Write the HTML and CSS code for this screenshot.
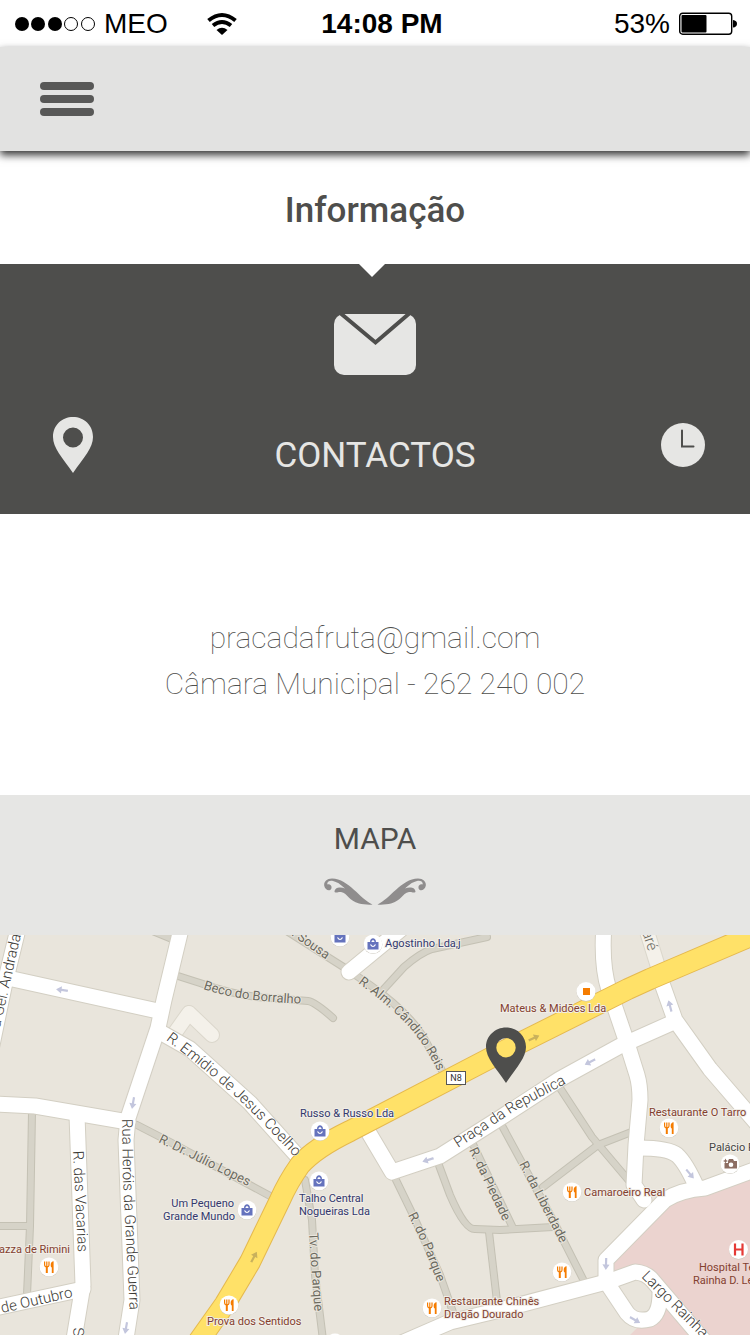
FILE: index.html
```html
<!DOCTYPE html>
<html lang="pt">
<head>
<meta charset="UTF-8">
<meta name="viewport" content="width=device-width, initial-scale=1.0">
<title>Informação</title>
<link rel="stylesheet" href="styles.css">
</head>
<body>

<div class="status">
    <div class="status-left">
        <svg class="signal" width="80" height="16" viewBox="0 0 80 16" aria-hidden="true">
            <circle cx="7" cy="8" r="7"/>
            <circle cx="23" cy="8" r="7"/>
            <circle cx="40" cy="8" r="7"/>
            <circle class="empty" cx="56" cy="8" r="6.5"/>
            <circle class="empty" cx="73" cy="8" r="6.5"/>
        </svg>
        <span>MEO</span>
        <svg class="wifi" width="30" height="24" viewBox="0 0 30 24" aria-hidden="true">
            <path class="arc" d="M1.500 8.500Q15 -2.500 28.500 8.500"/>
            <path class="arc" d="M6 13.500Q15 6.500 24 13.500"/>
            <path d="M9.500 18Q15 13.500 20.500 18L15 23Z"/>
        </svg>
    </div>
    <b class="time">14:08 PM</b>
    <div class="status-right">
        <span>53%</span>
        <svg width="58" height="24" viewBox="0 0 58 24" aria-hidden="true">
            <rect x="0.700" y="1.200" width="52" height="21" rx="3" fill="none" stroke="#000" stroke-width="1.400"/>
            <rect x="2.500" y="3" width="25" height="17.500" rx="1"/>
            <path d="M54 8Q58 8.500 58 11.700Q58 15 54 15.500Z"/>
        </svg>
    </div>
</div>

<header class="header">
    <button type="button" class="menu" aria-label="Menu">
        <span></span>
        <span></span>
        <span></span>
    </button>
</header>

<h1 class="title">Informação</h1>

<nav class="tabs">
    <button type="button" class="tab" aria-label="Localização">
        <svg width="40" height="56" viewBox="0 0 40 56">
            <path fill-rule="evenodd" d="M20 0C31 0 40 8 40 20C40 31 31 40 20 56C9 40 0 31 0 20C0 8 9 0 20 0ZM20 10.500A10 10 0 1 0 20 30.500A10 10 0 1 0 20 10.500Z"/>
        </svg>
    </button>
    <button type="button" class="tab tab-active">
        <svg width="82" height="62" viewBox="0 0 82 62" aria-hidden="true">
            <rect width="82" height="61" y="1" rx="10"/>
            <path d="M8 1H73L41.500 27Z"/>
            <path class="fold" d="M5 -1L41.500 29.500L77 -1"/>
        </svg>
        <span>CONTACTOS</span>
    </button>
    <button type="button" class="tab" aria-label="Horário">
        <svg width="44" height="44" viewBox="0 0 44 44">
            <circle cx="22" cy="22" r="22"/>
            <path class="hands" d="M21 7.500V23.500H32.500"/>
        </svg>
    </button>
</nav>

<section class="contacts">
    <a href="mailto:pracadafruta@gmail.com">pracadafruta@gmail.com</a>
    <p>Câmara Municipal - <a href="tel:262240002">262 240 002</a></p>
</section>

<section class="map-head">
    <h2>MAPA</h2>
    <svg width="102" height="28" viewBox="0 0 102 28" aria-hidden="true">
        <g id="scroll">
            <path d="M48.500 26.500C36 21 25 1 8 0.500C2 0.500 -0.500 4.500 0.300 8C1 12 5.500 13.500 7.200 11C8.500 8 6 5.500 3.500 6.500C2.500 4 5.500 2 9 3C15 4.500 18 8 21 10.500C16 8.500 10.500 9.500 10.500 14C13 15.500 14 13.500 17 14C24 15.500 25 23 35 25.500C39 26.500 45 27 48.500 26.500Z"/>
        </g>
        <use href="#scroll" transform="translate(102 0) scale(-1 1)"/>
    </svg>
</section>

<svg class="map" viewBox="0 935 750 400" role="img" aria-label="Mapa">
    <defs>
        <symbol id="shop" viewBox="-10 -10 20 20">
            <circle class="shadow" r="9.400" cy="0.600"/><circle class="disc" r="9.400"/>
            <path fill="#6573bd" d="M-5.500 -2H-3C-3 -7 3 -7 3 -2H5.500V5.500H-5.500ZM-1.500 -2H1.500C1.500 -4.500 -1.500 -4.500 -1.500 -2Z"/>
            <path fill="none" stroke="#fff" stroke-width="1.200" d="M-2.500 0.500Q0 4.500 2.500 0.500"/>
        </symbol>
        <symbol id="food" viewBox="-10 -10 20 20">
            <circle class="shadow" r="9.400" cy="0.600"/><circle class="disc" r="9.400"/>
            <path fill="none" stroke="#f57c00" stroke-width="1.200" d="M-4.400 -5.500V-2.500Q-4.400 0 -2.200 0Q0 0 0 -2.500V-5.500M-2.200 -5.500V0"/>
            <path fill="#f57c00" d="M-3.200 0H-1.200V6H-3.200ZM2 0C1 -3.500 2.500 -5.700 4.600 -5.700V6H2.800V0.500Z"/>
        </symbol>
        <symbol id="arrow" viewBox="-6 -4 12 8">
            <path d="M-6 0L-0.500 -3.600V-1.100H6V1.100H-0.500V3.600Z"/>
        </symbol>

        <path id="t-andrada" d="M-4 1045L9 988L21 935"/>
        <path id="t-beco" d="M203 989Q240 1002 312 1004"/>
        <path id="t-sousa" d="M291 935L341 970"/>
        <path id="t-alm" d="M358 983Q390 1006 410 1028Q428 1048 445 1087"/>
        <path id="t-emidio" d="M166 1040Q189 1057 219 1082T309 1172"/>
        <path id="t-julio" d="M158 1142L270 1197"/>
        <path id="t-herois" d="M122 1119L123 1180L131 1335"/>
        <path id="t-vacarias" d="M73 1151L79 1273"/>
        <path id="t-outubro" d="M2 1313L90 1293"/>
        <path id="t-tv" d="M309 1233L316 1335"/>
        <path id="t-parque" d="M408 1215L423 1245L446 1305"/>
        <path id="t-praca" d="M458 1148L516 1110L586 1073"/>
        <path id="t-piedade" d="M469 1150L514 1244"/>
        <path id="t-liberdade" d="M519 1164L577 1275"/>
        <path id="t-largo" d="M641 1277L720 1356"/>
        <path id="t-are" d="M642 932L654 968"/>
    </defs>

    <rect class="land" x="0" y="935" width="750" height="400"/>
    <path class="hospital" d="M606 1270L675 1200L705 1190L760 1168V1340H625L640 1325L655 1320L665 1300L655 1282L635 1272Z"/>

    <!-- each road is drawn twice: edge first, then the fill -->
    <g class="lane-edge">
        <g id="lanes">
            <path d="M150 930L172 939"/>
            <path d="M178 976L200 983Q240 997 270 998L308 1001Q315 1002 333 1018"/>
            <path d="M285 930L345 968L370 985Q410 1013 425 1040L445 1076"/>
            <path d="M383 990L404 967Q420 953 432 949L487 937"/>
            <path d="M137 1125L170 1142L272 1197"/>
            <path d="M32 1112L30 1226L27 1295M-5 1226H30"/>
            <path d="M305 1180L312 1220L315 1275L323 1340"/>
            <path d="M395 1178L413 1215L440 1275L454 1315"/>
            <path d="M437 1160L450 1195Q465 1230 475 1229L500 1230L553 1227"/>
            <path d="M489 1232L498 1310"/>
            <path d="M470 1138L513 1228"/>
            <path d="M500 1122L553 1220L586 1285"/>
            <path d="M558 1085L592 1137L630 1182"/>
            <path d="M634 1131L598 1145L543 1187"/>
        </g>
    </g>
    <use href="#lanes" class="lane"/>

    <path class="court-edge" d="M172 1037L189 1013L212 1035M645 925L659 970"/>
    <path class="court" d="M172 1037L189 1013L212 1035M645 925L659 970"/>

    <g class="street-edge">
        <g id="streets">
            <path d="M19 925L4 987L-8 1045"/>
            <path d="M8 978L158 1011"/>
            <path d="M182 925L164 1000L158 1028L128 1118L126 1140L132 1300L125 1345"/>
            <path d="M-5 1104L35 1106L128 1122"/>
            <path d="M77 1115L83 1285L73 1345"/>
            <path d="M-5 1308L83 1289"/>
            <path d="M160 1032L190 1049L250 1103L301 1160"/>
            <path d="M349 972L400 930"/>
            <path d="M366 1128L392 1172L440 1156L500 1118L560 1079L620 1046L674 1022"/>
            <path d="M604 925Q601 965 609 990L626 1040L637 1075Q640 1085 640 1100L636 1145L634 1185L644 1200"/>
            <path d="M659 975L675 1020L710 1069L765 1133"/>
            <path d="M639 1148Q668 1148 677 1155Q686 1163 697 1188"/>
            <path d="M765 1166L705 1188Q680 1190 665 1200L606 1260V1282"/>
            <path d="M390 1348L450 1322L500 1310L610 1281L635 1272Q647 1273 653 1281L705 1342"/>
            <path d="M607 1283L627 1313Q635 1323 650 1319Q660 1314 660 1293"/>
        </g>
    </g>
    <use href="#streets" class="street"/>

    <g class="highway-edge">
        <path id="highway" d="M765 930L650 979L628 989L500 1053L350 1131Q315 1148 300 1165Q288 1182 280 1200L250 1262L225 1304L196 1345"/>
    </g>
    <use href="#highway" class="highway"/>

    <g class="arrows">
        <use href="#arrow" x="-6" y="-4" width="12" height="8" transform="translate(62 990) rotate(8)"/>
        <use href="#arrow" x="-6" y="-4" width="12" height="8" transform="translate(133 1103) rotate(-80)"/>
        <use href="#arrow" x="-6" y="-4" width="12" height="8" transform="translate(126 1328) rotate(-80)"/>
        <use href="#arrow" x="-6" y="-4" width="12" height="8" transform="translate(428 1160) rotate(-18)"/>
        <use href="#arrow" x="-6" y="-4" width="12" height="8" transform="translate(590 1062) rotate(-27)"/>
        <use href="#arrow" x="-6" y="-4" width="12" height="8" transform="translate(670 1006) rotate(75)"/>
        <use href="#arrow" x="-6" y="-4" width="12" height="8" transform="translate(690 1174) rotate(-130)"/>
        <use href="#arrow" x="-6" y="-4" width="12" height="8" transform="translate(606 1264) rotate(-88)"/>
        <use href="#arrow" x="-6" y="-4" width="12" height="8" transform="translate(635 1320) rotate(-150)"/>
        <g class="arrows-gold">
            <use href="#arrow" x="-6" y="-4" width="12" height="8" transform="translate(534 1038) rotate(155)"/>
            <use href="#arrow" x="-6" y="-4" width="12" height="8" transform="translate(254 1257) rotate(118)"/>
        </g>
    </g>

    <g class="names">
        <text class="right"><textPath href="#t-andrada" startOffset="100%">a Gel. Andrada</textPath></text>
        <text><textPath href="#t-emidio">R. Emídio de Jesus Coelho</textPath></text>
        <text><textPath href="#t-herois">Rua Heróis da Grande Guerra</textPath></text>
        <text><textPath href="#t-vacarias">R. das Vacarias</textPath></text>
        <text><textPath href="#t-outubro">de Outubro</textPath></text>
        <text><textPath href="#t-praca">Praça da Republica</textPath></text>
        <text><textPath href="#t-largo">Largo Rainha</textPath></text>
        <text class="name-court"><textPath href="#t-are">aré</textPath></text>
        <text transform="translate(73 1328) rotate(85)">S</text>
    </g>
    <g class="names names-small">
        <text><textPath href="#t-beco">Beco do Borralho</textPath></text>
        <text><textPath href="#t-sousa">. Sousa</textPath></text>
        <text><textPath href="#t-alm">R. Alm. Cândido Reis</textPath></text>
        <text><textPath href="#t-julio">R. Dr. Júlio Lopes</textPath></text>
        <text><textPath href="#t-tv">Tv. do Parque</textPath></text>
        <text><textPath href="#t-parque">R. do Parque</textPath></text>
        <text><textPath href="#t-piedade">R. da Piedade</textPath></text>
        <text><textPath href="#t-liberdade">R. da Liberdade</textPath></text>
    </g>

    <rect x="446.500" y="1071.500" width="19" height="13" fill="#fff" stroke="#555"/>
    <text class="route" x="456" y="1081">N8</text>

    <use href="#shop" x="330" y="927" width="20" height="20"/>
    <use href="#shop" x="363" y="934" width="20" height="20"/>
    <use href="#shop" x="310" y="1121" width="20" height="20"/>
    <use href="#shop" x="309" y="1171" width="20" height="20"/>
    <use href="#shop" x="237" y="1200" width="20" height="20"/>
    <use href="#shop" x="325" y="1333" width="20" height="20"/>
    <use href="#food" x="659" y="1118" width="20" height="20"/>
    <use href="#food" x="562" y="1182" width="20" height="20"/>
    <use href="#food" x="552" y="1262" width="20" height="20"/>
    <use href="#food" x="422" y="1298" width="20" height="20"/>
    <use href="#food" x="219" y="1295" width="20" height="20"/>
    <use href="#food" x="39" y="1257" width="20" height="20"/>

    <circle class="shadow" cx="586" cy="992" r="9.500"/>
    <circle class="disc" cx="586" cy="991.500" r="9.500"/>
    <rect x="583" y="988" width="7" height="7" fill="#f57c00"/>

    <circle class="shadow" cx="730" cy="1164.500" r="9.500"/>
    <circle class="disc" cx="730" cy="1164" r="9.500"/>
    <path fill="#8d6e63" fill-rule="evenodd" d="M728 1161L729 1159H733L734 1161H737V1168.500H724.500V1163H728ZM731 1162.500A2.300 2.300 0 1 0 731 1167.100A2.300 2.300 0 1 0 731 1162.500Z"/>
    <path fill="#8d6e63" d="M725.500 1158.500L726.300 1160.200L728 1161L726.300 1161.800L725.500 1163.500L724.700 1161.800L723 1161L724.700 1160.200Z"/>

    <circle class="shadow" cx="738.500" cy="1250" r="9.500"/>
    <circle class="disc" cx="738.500" cy="1249.500" r="9.500"/>
    <path fill="none" stroke="#e53935" stroke-width="2.200" d="M735 1243.500V1255.500M742.500 1243.500V1255.500M735 1249.500H742.500"/>

    <g class="places places-blue">
        <text x="385" y="947">Agostinho Lda,j</text>
        <text x="300" y="1117">Russo &amp; Russo Lda</text>
        <text x="299" y="1202">Talho Central</text>
        <text x="299" y="1215">Nogueiras Lda</text>
        <text class="right" x="234" y="1207">Um Pequeno</text>
        <text class="right" x="235" y="1220">Grande Mundo</text>
    </g>
    <g class="places places-red">
        <text x="500" y="1012">Mateus &amp; Midões Lda</text>
        <text x="649" y="1116">Restaurante O Tarro</text>
        <text x="584" y="1196">Camaroeiro Real</text>
        <text x="444" y="1305">Restaurante Chinês</text>
        <text x="444" y="1318">Dragão Dourado</text>
        <text x="207" y="1325">Prova dos Sentidos</text>
        <text class="right" x="70" y="1253">Piazza de Rimini</text>
    </g>
    <g class="places places-pink">
        <text x="699" y="1271">Hospital Termal</text>
        <text x="693" y="1284">Rainha D. Leonor</text>
    </g>
    <text class="places" x="709" y="1151">Palácio Real</text>

    <path class="pin" fill-rule="evenodd" d="M506 1027.500C517 1027.500 526 1036 526 1047C526 1058 516 1068 506 1083C496 1068 486 1058 486 1047C486 1036 495 1027.500 506 1027.500ZM506 1038A9.700 9.700 0 1 0 506 1057.400A9.700 9.700 0 1 0 506 1038Z"/>
</svg>

</body>
</html>
```
FILE: styles.css
```css
* { box-sizing: border-box; }
body { margin: 0; background-color: #fff; color: #4e4e4c; font-family: Roboto, Arial, sans-serif; }
h1, h2, p { margin: 0; }
a { color: inherit; text-decoration: none; }
button { border: none; background: none; padding: 0; color: inherit; font: inherit; cursor: pointer; }
svg { display: block; }

/* status bar */
.status {
    display: grid;
    grid-template-columns: 1fr auto 1fr;
    align-items: center;
    height: 47px;
    padding: 0 13px 0 15px;
    color: #000;
    font-family: "Liberation Sans", Arial, sans-serif;
    font-size: 28px;
}
.status-left, .status-right { display: flex; align-items: center; gap: 9px; }
.status-right { justify-content: flex-end; }
.time { padding-left: 12px; }
.signal .empty { fill: none; stroke: #000; }
.wifi { margin-left: 30px; }
.wifi .arc { fill: none; stroke: #000; stroke-width: 4; }

/* header */
.header {
    position: relative;
    display: flex;
    align-items: center;
    height: 104px;
    padding: 0 40px;
    background-color: #e2e2e1;
    box-shadow: 0 4px 8px rgba(0, 0, 0, 0.8);
}
.menu { display: flex; flex-direction: column; gap: 5px; width: 54px; }
.menu span { height: 8px; border-radius: 4px; background-color: #585857; }

.title { padding: 39px 0 32px; text-align: center; font-size: 35px; line-height: 42px; font-weight: 500; }

/* tabs */
.tabs {
    position: relative;
    display: grid;
    grid-template-columns: 1fr auto 1fr;
    align-items: end;
    padding: 49px 45px 34px 53px;
    background-color: #4e4e4c;
    color: #e6e6e4;
}
.tabs::before {
    content: "";
    position: absolute;
    top: 0;
    left: 50%;
    margin-left: -16px;
    border: 13px solid transparent;
    border-top-color: #fff;
    border-bottom: none;
}
.tabs svg { fill: #e6e6e4; }
.tab { display: flex; flex-direction: column; align-items: flex-start; padding-bottom: 7px; }
.tab:last-child { align-items: flex-end; padding-bottom: 13px; }
.tab-active { align-items: center; gap: 57px; margin-left: -8px; padding-bottom: 0; font-size: 35px; line-height: 48px; }
.tabs .fold, .tabs .hands { fill: none; stroke: #4e4e4c; stroke-width: 4; }
.tabs .hands { stroke-width: 2; stroke-linecap: round; }

/* contacts */
.contacts { padding: 101px 20px 88px; text-align: center; font-size: 30px; line-height: 46px; font-weight: 100; }

/* map */
.map-head {
    display: flex;
    flex-direction: column;
    align-items: center;
    gap: 20px;
    padding: 25px 0 29px;
    background-color: #e6e6e4;
}
.map-head h2 { font-size: 30px; line-height: 38px; font-weight: 400; }
.map-head svg { fill: #8f8d8d; }

.map { width: 100%; height: auto; }
.land { fill: #e9e5dc; }
.hospital { fill: #ebd3cf; }
.map use, .lane-edge, .street-edge, .highway-edge { stroke-linejoin: round; }
.lane-edge { fill: none; stroke: #c4c1b4; stroke-width: 8; stroke-linecap: round; }
.lane { fill: none; stroke: #d6d3c8; stroke-width: 6; stroke-linecap: round; }
.court-edge { fill: none; stroke: #dbd7cc; stroke-width: 16; stroke-linecap: round; stroke-linejoin: round; }
.court { fill: none; stroke: #f4f1ea; stroke-width: 14; stroke-linecap: round; stroke-linejoin: round; }
.street-edge { fill: none; stroke: #d3cfc3; stroke-width: 17; stroke-linecap: round; }
.street { fill: none; stroke: #fff; stroke-width: 15; stroke-linecap: round; }
.highway-edge { fill: none; stroke: #e5b94f; stroke-width: 22; }
.highway { fill: none; stroke: #ffe168; stroke-width: 20; }
.arrows { fill: #c3c6dd; }
.arrows-gold { fill: #c9b15c; }
.disc { fill: #fff; }
.shadow { fill: #c9c5bb; }
.pin { fill: #4e4e4c; }

.names { fill: #3c3a35; font-size: 15px; font-weight: 300; stroke: #fff; stroke-width: 1; paint-order: stroke; }
.names-small { fill: #6c6a5f; font-size: 13px; font-weight: 400; stroke: #e9e5dc; stroke-width: 2; }
.name-court { fill: #6c6a5f; stroke: #f4f1ea; }
.places { fill: #444; font-size: 11px; stroke: #f1eee7; stroke-width: 2; paint-order: stroke; }
.places-blue { fill: #33386e; }
.places-red { fill: #83402f; }
.places-pink { fill: #83402f; stroke: #ebd3cf; }
.right { text-anchor: end; }
.route { fill: #333; font-size: 9px; text-anchor: middle; }
```
